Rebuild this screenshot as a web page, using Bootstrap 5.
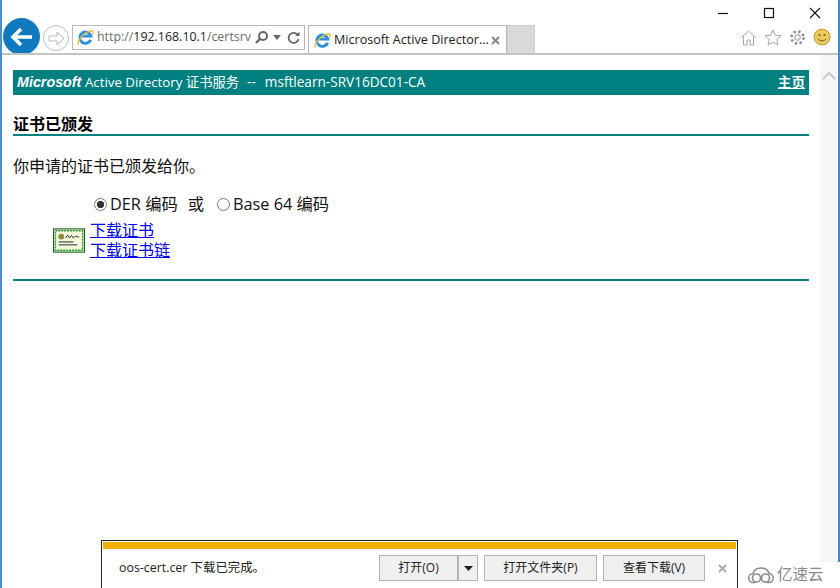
<!DOCTYPE html>
<html lang="zh">
<head>
    <meta charset="UTF-8">
    <title>Microsoft Active Directory 证书服务</title>
    <link href="https://cdn.jsdelivr.net/npm/bootstrap@5.3.0/dist/css/bootstrap.min.css" rel="stylesheet">
    <style>
        html, body { height: 100%; overflow: hidden; }
        body {
            font-family: "Open Sans", "Noto Sans CJK SC", sans-serif;
            font-size: 16px;
            color: #111;
            background: #fff;
        }
        .ie-window { height: 588px; border-left: 2px solid #4a8fd0; border-right: 2px solid #3d8ccf; }
        .ie-chrome { height: 55px; border-bottom: 2px solid #c4c4c4; overflow: hidden; }
        .win-row { height: 25px; }
        .win-btn { width: 46px; height: 25px; }
        .nav-row { height: 28px; padding-left: 1px; }
        .back-btn { width: 37px; height: 37px; margin-top: -7px; border-radius: 50%; background: #0f79bf; flex: none; }
        .fwd-btn { width: 26px; height: 26px; margin-left: 3px; border-radius: 50%; border: 1px solid #bdbdbd; flex: none; }
        .addr-box { width: 233px; height: 25px; margin-left: 3px; border: 1px solid #b9b9b9; flex: none; padding-left: 4px; font-size: 12.4px; color: #6d6d6d; white-space: nowrap; }
        .addr-host { color: #222; }
        .addr-url { width: 157px; flex: none; }
        .logo-gap { margin-right: 3px; }
        .reload-icon { margin-left: 6px; }
        .ie-tab { width: 199px; height: 28px; margin-left: 3px; border: 1px solid #b9b9b9; border-bottom: 0; flex: none; padding: 1px 0 0 5px; font-size: 12.6px; white-space: nowrap; color: #222; }
        .tab-label { width: 157px; flex: none; }
        .new-tab { width: 28px; height: 28px; background: #d9d9d9; border: 1px solid #cfcfcf; border-bottom: 0; flex: none; }
        .tool-icons { margin-left: auto; padding-right: 7px; gap: 7px; margin-top: 3px; }
        .ie-body { height: 531px; }
        .page-pane { padding: 15px 0 0 11px; width: 807px; flex: none; }
        .scroll-track { background: #f6f6f6; margin-left: 11px; padding-top: 16px; }
        .cert-banner { background: #008080; color: #fff; height: 25px; padding: 0 4px; font-size: 13.6px; line-height: 24px; white-space: nowrap; }
        .ms-word { font-family: "Liberation Sans", sans-serif; font-weight: 700; font-style: italic; font-size: 14.3px; }
        .svc-name { font-size: 13.3px; }
        .svc-sep { margin: 0 9px 0 8px; }
        .home-link { color: #fff; font-weight: 700; }
        .cert-title { font-size: 16px; font-weight: 700; line-height: 20px; margin-top: 19px; color: #000; }
        .teal-rule { height: 2px; background: #008080; }
        .teal-rule-end { margin-top: 19px; }
        .issued-text { line-height: 20px; margin-top: 20px; }
        .enc-row { margin-top: 18px; margin-left: 81px; font-size: 16.3px; line-height: 20px; white-space: nowrap; }
        .fake-radio { width: 13px; height: 13px; border: 1px solid #777; border-radius: 50%; background: #fff; flex: none; margin-right: 3px; }
        .fake-radio.on { background: radial-gradient(circle, #333 0 3.4px, #fff 3.9px); }
        .enc-or { margin: 0 13px 0 10px; }
        .dl-row { margin-top: 6px; margin-left: 40px; }
        .dl-links { line-height: 20px; margin-left: 5px; }
        .dl-links a { color: #0000ee; display: block; }
        .download-bar {
            left: 99px; bottom: 0; width: 637px; height: 48px;
            background: #fff;
            border: 1px solid #222; border-bottom: 0;
            font-size: 12px; color: #222;
        }
        .gold-strip { height: 7px; margin: 1px 1px 0 1px; background: #efb000; }
        .bar-body { height: 39px; padding: 6px 0 0 17px; }
        .bar-name { font-size: 12.4px; line-height: 26px; margin-right: auto; }
        .bar-btn { height: 26px; background: #f0f0f0; border: 1px solid #b4b4b4; font-size: 12px; line-height: 24px; text-align: center; color: #222; flex: none; }
        .btn-open { width: 79px; }
        .btn-drop { width: 20px; margin-right: 6px; }
        .btn-folder { width: 113px; margin-right: 6px; }
        .btn-view { width: 102px; margin-right: 13px; }
        .bar-close { width: 12px; margin-right: 7px; flex: none; margin-top: 9px; }
        .watermark { right: -2px; bottom: 0; width: 102px; height: 26px; background: #fff; color: #8a8a8a; font-size: 15.500px; padding-left: 10px; gap: 3px; }
    </style>
</head>
<body>
<div class="ie-window position-relative">
    <div class="ie-chrome">
        <div class="win-row d-flex justify-content-end">
            <div class="win-btn d-flex align-items-center justify-content-center"><svg width="12" height="12"><path d="M1 6.500h10" stroke="#111" stroke-width="1.200"/></svg></div>
            <div class="win-btn d-flex align-items-center justify-content-center"><svg width="12" height="12"><rect x="1.500" y="1.500" width="9" height="9" fill="none" stroke="#111" stroke-width="1.200"/></svg></div>
            <div class="win-btn d-flex align-items-center justify-content-center"><svg width="12" height="12"><path d="M1 1l10 10M11 1L1 11" stroke="#111" stroke-width="1.100"/></svg></div>
        </div>
        <div class="nav-row d-flex align-items-start">
            <div class="back-btn d-flex align-items-center justify-content-center">
                <svg width="24" height="22" viewBox="0 0 24 22"><path d="M11 3L3 11l8 8M3.500 11H22" fill="none" stroke="#fff" stroke-width="3.600"/></svg>
            </div>
            <div class="fwd-btn d-flex align-items-center justify-content-center">
                <svg width="17" height="15" viewBox="0 0 17 15"><path d="M9 1l7 6.500L9 14v-4H1V5h8z" fill="none" stroke="#b5b5b5"/></svg>
            </div>
            <div class="addr-box d-flex align-items-center">
                <svg class="flex-shrink-0 logo-gap" width="17" height="17" viewBox="0 0 18 18"><path d="M14.500 11.500A6 6 0 1 1 14.700 7.500H4.500" fill="none" stroke="#2a8fdc" stroke-width="3"/><path d="M1.500 16.500C0 14 5 5 14 2c3-1 3.500 1.500 2.500 4" fill="none" stroke="#e9b93a" stroke-width="1.500"/></svg>
                <span class="addr-url">http://<span class="addr-host">192.168.10.1</span>/certsrv</span>
                <svg width="15" height="15" viewBox="0 0 15 15"><circle cx="9" cy="6" r="4" fill="none" stroke="#666" stroke-width="2"/><path d="M6 9l-4 4" stroke="#666" stroke-width="2.400"/></svg>
                <svg class="ms-1" width="8" height="5"><path d="M0 0h8L4 5z" fill="#666"/></svg>
                <svg class="reload-icon" width="13" height="14" viewBox="0 0 13 14"><path d="M11 4.500A5 5 0 1 0 11.500 8" fill="none" stroke="#666" stroke-width="1.800"/><path d="M8 5h4.500V.5z" fill="#666"/></svg>
            </div>
            <div class="ie-tab d-flex align-items-center">
                <svg class="flex-shrink-0 logo-gap" width="17" height="17" viewBox="0 0 18 18"><path d="M14.500 11.500A6 6 0 1 1 14.700 7.500H4.500" fill="none" stroke="#2a8fdc" stroke-width="3"/><path d="M1.500 16.500C0 14 5 5 14 2c3-1 3.500 1.500 2.500 4" fill="none" stroke="#e9b93a" stroke-width="1.500"/></svg>
                <span class="tab-label">Microsoft Active Director...</span>
                <svg width="9" height="9"><path d="M1 1l7 7M8 1L1 8" stroke="#888" stroke-width="2"/></svg>
            </div>
            <div class="new-tab"></div>
            <div class="tool-icons d-flex align-items-center">
                <svg width="17" height="17" viewBox="0 0 17 17"><path d="M1 9l7.500-7L16 9M3.500 7.500V16h3.500v-5h3v5h3.500V7.500" fill="none" stroke="#a5a5a5"/></svg>
                <svg width="18" height="17" viewBox="0 0 18 17"><path d="M9 1l2.300 5.300 5.700.5-4.300 3.700 1.300 5.600L9 13.200l-5 2.900 1.300-5.600L1 6.800l5.700-.5z" fill="none" stroke="#a5a5a5"/></svg>
                <svg width="17" height="17" viewBox="0 0 17 17"><circle cx="8.500" cy="8.500" r="2.800" fill="none" stroke="#8f8f8f"/><circle cx="8.500" cy="8.500" r="6" fill="none" stroke="#8f8f8f" stroke-width="2.600" stroke-dasharray="2.400 2.300"/></svg>
                <svg width="18" height="18" viewBox="0 0 18 18"><circle cx="9" cy="9" r="8" fill="#ecc75a" stroke="#b89a3c"/><circle cx="6.500" cy="7" r="1" fill="#6b5a20"/><circle cx="11.500" cy="7" r="1" fill="#6b5a20"/><path d="M5 11c2 2.500 6 2.500 8 0" fill="none" stroke="#6b5a20"/></svg>
            </div>
        </div>
    </div>
    <div class="ie-body d-flex">
        <div class="page-pane">
            <div class="cert-banner d-flex justify-content-between">
                <span><span class="ms-word">Microsoft</span> <span class="svc-name">Active Directory 证书服务</span><span class="svc-sep">--</span>msftlearn-SRV16DC01-CA</span>
                <a class="home-link" href="#">主页</a>
            </div>
            <div class="cert-title">证书已颁发</div>
            <div class="teal-rule"></div>
            <div class="issued-text">你申请的证书已颁发给你。</div>
            <div class="enc-row d-flex align-items-center">
                <span class="fake-radio on"></span><span>DER 编码</span><span class="enc-or">或</span><span class="fake-radio"></span><span>Base 64 编码</span>
            </div>
            <div class="dl-row d-flex align-items-center">
                <svg width="32" height="25" viewBox="0 0 33 25"><rect x=".5" y=".5" width="32" height="24" fill="#cfe6b8" stroke="#14551f"/><rect x="2.500" y="2.500" width="28" height="20" fill="#f3f7dc" stroke="#2f9a3a" stroke-width="1.400" stroke-dasharray="2 1"/><circle cx="8.500" cy="8.500" r="3" fill="#8a8a3a"/><path d="M13 10l2-3 2 3 2-3 2 3 2-2 4 1" fill="none" stroke="#223" stroke-width=".9"/><path d="M6 14h15M6 17h19" stroke="#223"/></svg>
                <div class="dl-links"><a href="#">下载证书</a><a href="#">下载证书链</a></div>
            </div>
            <div class="teal-rule teal-rule-end"></div>
        </div>
        <div class="scroll-track flex-grow-1 d-flex justify-content-center align-items-start">
            <svg width="14" height="9"><path d="M1 8l6-6 6 6" fill="none" stroke="#c8c8c8" stroke-width="2"/></svg>
        </div>
    </div>
    <div class="download-bar position-absolute">
        <div class="gold-strip"></div>
        <div class="bar-body d-flex">
            <span class="bar-name">oos-cert.cer 下载已完成。</span>
            <div class="bar-btn btn-open">打开(O)</div>
            <div class="bar-btn btn-drop"><svg width="9" height="5"><path d="M0 0h9L4.500 5z" fill="#222"/></svg></div>
            <div class="bar-btn btn-folder">打开文件夹(P)</div>
            <div class="bar-btn btn-view">查看下载(V)</div>
            <svg class="bar-close" width="9" height="9"><path d="M1 1l7 7M8 1L1 8" stroke="#aaa" stroke-width="2"/></svg>
        </div>
    </div>
    <div class="watermark position-absolute d-flex align-items-center">
        <svg width="26" height="17" viewBox="0 0 26 17"><path d="M7 15.500H5.500a4.500 4.500 0 0 1-.5-9C6 3 9 1 13 1s7 2 8 5.500a4.500 4.500 0 0 1-.5 9H19" fill="none" stroke="#8a8a8a" stroke-width="1.500"/><circle cx="8.500" cy="11" r="4" fill="none" stroke="#8a8a8a" stroke-width="1.600"/><circle cx="17.500" cy="11" r="4" fill="none" stroke="#8a8a8a" stroke-width="1.600"/></svg>
        <span>亿速云</span>
    </div>
</div>
</body>
</html>
